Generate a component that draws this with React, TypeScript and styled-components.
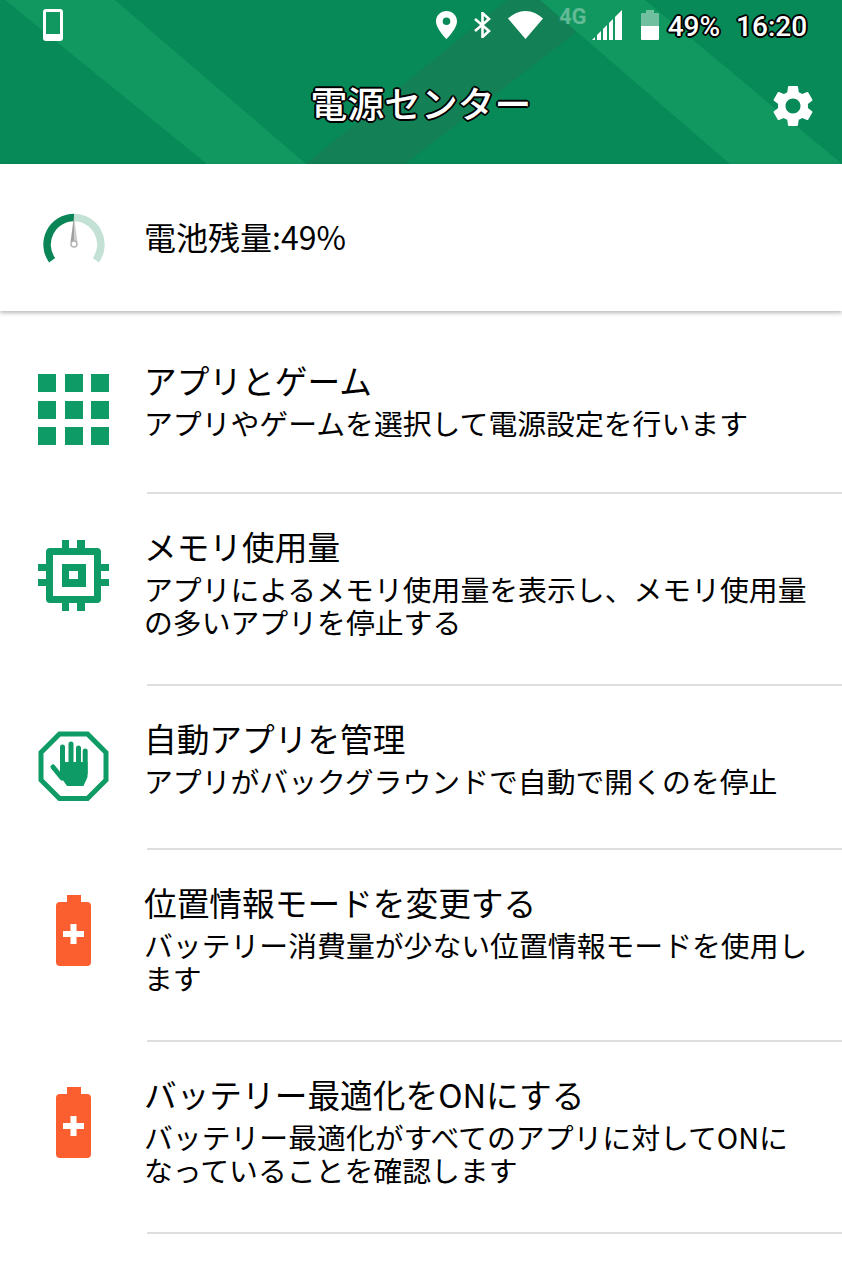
import styled, { createGlobalStyle, css } from 'styled-components'

const Global = createGlobalStyle`
  html, body { margin: 0; padding: 0; background: #fff; }
  body { font-family: "Noto Sans CJK JP", "Noto Sans", sans-serif; color: #000; }
`

const outline = css`
  color: #fff;
  text-shadow:
    -2px 0 #000, 2px 0 #000, 0 -2px #000, 0 2px #000,
    -1.4px -1.4px #000, 1.4px -1.4px #000, -1.4px 1.4px #000, 1.4px 1.4px #000;
`

const Page = styled.div`
  width: 842px;
  height: 1263px;
  overflow: hidden;
  background: #fff;
`

const Header = styled.header`
  position: relative;
  height: 164px;
  background: #078a57;
  color: #fff;
`

const HeaderArt = styled.svg`
  position: absolute;
  inset: 0;
`

const StatusBar = styled.div`
  position: relative;
  display: flex;
  align-items: center;
  height: 50px;
  padding: 0 33px 0 43px;
`

const StatusIcon = styled.svg<{ $ml?: number }>`
  display: block;
  flex: none;
  margin-left: ${({ $ml }) => $ml ?? 0}px;
`

const Net = styled.span`
  margin-left: 16px;
  margin-top: -17px;
  font: 700 22px/20px "Roboto", sans-serif;
  color: rgba(255, 255, 255, 0.35);
`

const StatusText = styled.span<{ $ml: number }>`
  margin-left: ${({ $ml }) => $ml}px;
  margin-top: 3px;
  font: 500 28px/34px "Roboto", sans-serif;
  ${outline}
`

const TitleBar = styled.div`
  position: relative;
  display: flex;
  align-items: center;
  justify-content: center;
  height: 106px;
`

const Title = styled.h1`
  margin: 0 0 3px;
  font-size: 36.8px;
  line-height: 48px;
  font-weight: 500;
  ${outline}
`

const Gear = styled.svg`
  position: absolute;
  right: 24px;
  top: 31px;
`

const BatteryRow = styled.section`
  position: relative;
  display: flex;
  align-items: center;
  height: 147px;
  box-shadow: 0 2px 4px rgba(0, 0, 0, 0.28);
`

const IconCol = styled.div`
  flex: none;
  width: 144px;
  padding-left: 38px;
  box-sizing: border-box;
  display: flex;
`

const BatteryText = styled.div`
  padding-bottom: 3px;
  font-size: 32px;
  line-height: 42px;
`

const List = styled.div`
  padding-top: 17px;
`

const Row = styled.div<{ $h: number }>`
  display: flex;
  align-items: flex-start;
  height: ${({ $h }) => $h}px;
`

const RowIcon = styled(IconCol)<{ $top: number }>`
  padding-top: ${({ $top }) => $top}px;
`

const RowText = styled.div`
  flex: none;
  width: 672px;
  padding-top: 32px;
`

const RowTitle = styled.div`
  font-size: 32.7px;
  line-height: 40px;
`

const RowSub = styled.div`
  margin-top: 6px;
  font-size: 28.85px;
  line-height: 33px;
`

const Divider = styled.div`
  height: 2px;
  margin-left: 147px;
  background: #dedede;
`

const GREEN = '#0f9b65'
const ORANGE = '#fb5f2f'

const GridIcon = () => (
  <svg width="71" height="71" viewBox="0 0 71 71" fill={GREEN}>
    {[0, 27, 53].map((y) =>
      [0, 27, 53].map((x) => <rect key={`${x}-${y}`} x={x} y={y} width="18" height="18" />)
    )}
  </svg>
)

const ChipIcon = () => (
  <svg width="71" height="71" viewBox="0 0 71 71" fill={GREEN}>
    <path
      fillRule="evenodd"
      d="M12 8h47a4 4 0 0 1 4 4v47a4 4 0 0 1-4 4H12a4 4 0 0 1-4-4V12a4 4 0 0 1 4-4zM15 15v41h41V15z"
    />
    <path fillRule="evenodd" d="M24 24h24v23H24zM31 31v8h9v-8z" />
    <rect x="24" y="0" width="7" height="8" />
    <rect x="39" y="0" width="8" height="8" />
    <rect x="24" y="63" width="7" height="8" />
    <rect x="39" y="63" width="8" height="8" />
    <rect x="0" y="24" width="8" height="7" />
    <rect x="0" y="39" width="8" height="7" />
    <rect x="63" y="24" width="8" height="7" />
    <rect x="63" y="39" width="8" height="7" />
  </svg>
)

const StopIcon = () => (
  <svg width="71" height="71" viewBox="0 0 71 71" fill="none">
    <polygon points="21.5,3 49.5,3 68,21.5 68,49 49.5,67.5 21.5,67.5 3,49 3,21.5" stroke={GREEN} strokeWidth="5" />
    <g stroke={GREEN} strokeLinecap="round" strokeWidth="5">
      <line x1="24.5" y1="16" x2="24.5" y2="36" />
      <line x1="33" y1="13" x2="33" y2="36" />
      <line x1="40.5" y1="17" x2="40.5" y2="36" />
      <line x1="47.2" y1="20" x2="47.2" y2="42" />
      <line x1="15" y1="36" x2="24" y2="47" />
    </g>
    <path d="M22 31H49.5v15l-4 9H29l-7-10z" fill={GREEN} />
  </svg>
)

const BatteryIcon = () => (
  <svg width="71" height="71" viewBox="0 0 71 71">
    <path
      d="M29 0h14v7h6a4 4 0 0 1 4 4v56a4 4 0 0 1-4 4H22a4 4 0 0 1-4-4V11a4 4 0 0 1 4-4h7z"
      fill={ORANGE}
    />
    <rect x="25" y="36" width="21" height="6" fill="#fff" />
    <rect x="32.5" y="29" width="6" height="20" fill="#fff" />
  </svg>
)

const GaugeIcon = () => (
  <svg width="71" height="60" viewBox="0 0 71 60" fill="none">
    <path d="M36 9.5A27 27 0 0 1 57.9 52.2" stroke="#c3e1d5" strokeWidth="7.5" />
    <path d="M14.1 52.2A27 27 0 0 1 36 9.5" stroke="#0a8557" strokeWidth="7.5" />
    <polygon points="36,8 36,34 32.5,34" fill="#a0a0a0" />
    <polygon points="36,8 36,34 39.5,34" fill="#d0d0d0" />
    <circle cx="36" cy="36" r="3" fill="#fff" stroke="#b5b5b5" strokeWidth="1.5" />
  </svg>
)

const items = [
  { icon: <GridIcon />, top: 46, title: 'アプリとゲーム', sub: 'アプリやゲームを選択して電源設定を行います', h: 164 },
  { icon: <ChipIcon />, top: 46, title: 'メモリ使用量', sub: 'アプリによるメモリ使用量を表示し、メモリ使用量の多いアプリを停止する', h: 190 },
  { icon: <StopIcon />, top: 45, title: '自動アプリを管理', sub: 'アプリがバックグラウンドで自動で開くのを停止', h: 162 },
  { icon: <BatteryIcon />, top: 45, title: '位置情報モードを変更する', sub: 'バッテリー消費量が少ない位置情報モードを使用します', h: 190 },
  { icon: <BatteryIcon />, top: 45, title: 'バッテリー最適化をONにする', sub: 'バッテリー最適化がすべてのアプリに対してONになっていることを確認します', h: 190 },
]

export default function App() {
  return (
    <Page>
      <Global />
      <Header>
        <HeaderArt width="842" height="164" viewBox="0 0 842 164">
          <polygon points="507,0 618,0 405,164 306,164" fill="#138055" />
          <polygon points="5,0 115,0 306,164 207,164" fill="#119760" />
          <polygon points="540,0 645,0 842,164 730,164" fill="#119760" />
        </HeaderArt>
        <StatusBar>
          <StatusIcon width="20" height="32" viewBox="0 0 20 32">
            <path
              fillRule="evenodd"
              d="M3 0h14a3 3 0 0 1 3 3v26a3 3 0 0 1-3 3H3a3 3 0 0 1-3-3V3a3 3 0 0 1 3-3zM3 3v22h14V3z"
              fill="#fff"
            />
          </StatusIcon>
          <StatusIcon $ml={373} width="21" height="28" viewBox="0 0 21 28">
            <path
              fillRule="evenodd"
              d="M10.5 0C4.7 0 0 4.6 0 10.4 0 17.5 10.5 28 10.5 28S21 17.5 21 10.4C21 4.6 16.3 0 10.5 0zm0 14a3.8 3.8 0 1 1 0-7.6 3.8 3.8 0 0 1 0 7.6z"
              fill="#fff"
            />
          </StatusIcon>
          <StatusIcon $ml={16} width="19" height="26" viewBox="0 0 19 26" fill="none">
            <path d="M2 7l14 12-6.5 6V1L16 7 2 19" stroke="#fff" strokeWidth="2.6" />
          </StatusIcon>
          <StatusIcon $ml={16} width="35" height="28" viewBox="0 0 35 28">
            <path d="M17.5 28L0 7.5C5 3 11 0 17.5 0S30 3 35 7.5z" fill="#fff" />
          </StatusIcon>
          <Net>4G</Net>
          <StatusIcon $ml={5} width="30" height="30" viewBox="0 0 30 30" fill="#fff">
            <polygon points="0,30 3,27 3,30" />
            <polygon points="5,30 5,25 9,21 9,30" />
            <polygon points="11,30 11,19 15,15 15,30" />
            <polygon points="17,30 17,13 21,9 21,30" />
            <polygon points="23,30 23,7 30,0 30,30" />
          </StatusIcon>
          <StatusIcon $ml={19} width="18" height="30" viewBox="0 0 18 30" fill="#fff">
            <path d="M5 0h8v3h4a1 1 0 0 1 1 1v12H0V4a1 1 0 0 1 1-1h4z" opacity="0.4" />
            <path d="M0 16h18v13a1 1 0 0 1-1 1H1a1 1 0 0 1-1-1z" />
          </StatusIcon>
          <StatusText $ml={9}>49%</StatusText>
          <StatusText $ml={16}>16:20</StatusText>
        </StatusBar>
        <TitleBar>
          <Title>電源センター</Title>
          <Gear width="50" height="50" viewBox="0 0 24 24">
            <path
              fill="#fff"
              d="M19.14 12.94c.04-.3.06-.61.06-.94 0-.32-.02-.64-.07-.94l2.03-1.58c.18-.14.23-.41.12-.61l-1.92-3.32c-.12-.22-.37-.29-.59-.22l-2.39.96c-.5-.38-1.03-.7-1.62-.94l-.36-2.54c-.04-.24-.24-.41-.48-.41h-3.84c-.24 0-.43.17-.47.41l-.36 2.54c-.59.24-1.13.57-1.62.94l-2.39-.96c-.22-.08-.47 0-.59.22L2.74 8.87c-.12.21-.08.47.12.61l2.03 1.58c-.05.3-.09.63-.09.94s.02.64.07.94l-2.03 1.58c-.18.14-.23.41-.12.61l1.92 3.32c.12.22.37.29.59.22l2.39-.96c.5.38 1.03.7 1.62.94l.36 2.54c.05.24.24.41.48.41h3.84c.24 0 .44-.17.47-.41l.36-2.54c.59-.24 1.13-.56 1.62-.94l2.39.96c.22.08.47 0 .59-.22l1.92-3.32c.12-.22.07-.47-.12-.61l-2.01-1.58zM12 15.6c-1.98 0-3.6-1.62-3.6-3.6s1.62-3.6 3.6-3.6 3.6 1.62 3.6 3.6-1.62 3.6-3.6 3.6z"
            />
          </Gear>
        </TitleBar>
      </Header>
      <BatteryRow>
        <IconCol>
          <GaugeIcon />
        </IconCol>
        <BatteryText>電池残量:49%</BatteryText>
      </BatteryRow>
      <List>
        {items.map((item) => (
          <div key={item.title}>
            <Row $h={item.h}>
              <RowIcon $top={item.top}>{item.icon}</RowIcon>
              <RowText>
                <RowTitle>{item.title}</RowTitle>
                <RowSub>{item.sub}</RowSub>
              </RowText>
            </Row>
            <Divider />
          </div>
        ))}
      </List>
    </Page>
  )
}
